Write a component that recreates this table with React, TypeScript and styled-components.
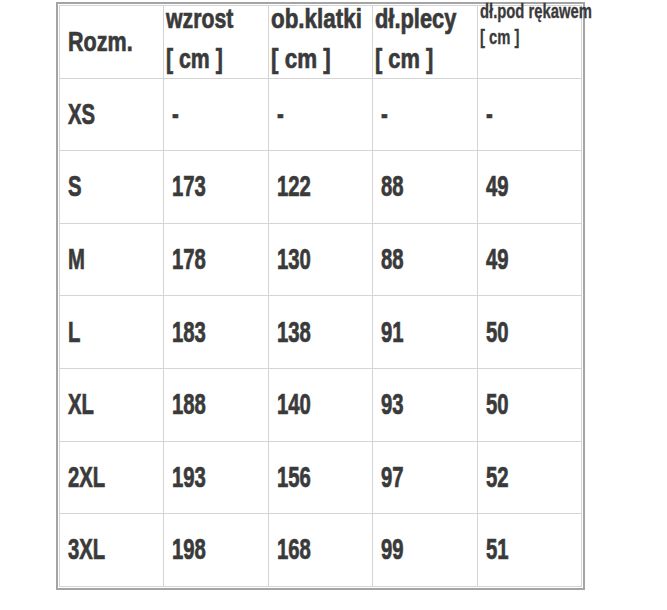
import React from "react";
import styled, { createGlobalStyle } from "styled-components";

interface IRow {
  size: string;
  values: string[];
}

interface ITextProps {
  $scale: number;
}

const rows: IRow[] = [
  { size: "XS", values: ["-", "-", "-", "-"] },
  { size: "S", values: ["173", "122", "88", "49"] },
  { size: "M", values: ["178", "130", "88", "49"] },
  { size: "L", values: ["183", "138", "91", "50"] },
  { size: "XL", values: ["188", "140", "93", "50"] },
  { size: "2XL", values: ["193", "156", "97", "52"] },
  { size: "3XL", values: ["198", "168", "99", "51"] },
];

const GlobalStyle = createGlobalStyle`
  html, body {
    margin: 0;
    padding: 0;
    background: #ffffff;
  }
  body {
    font-family: "Liberation Sans", Arial, sans-serif;
    color: #3a3a3a;
  }
`;

const Page = styled.div`
  width: 667px;
  height: 610px;
  padding: 2px 0 0 56px;
  box-sizing: border-box;
`;

const TableFrame = styled.div`
  width: 529px;
  box-sizing: border-box;
  border: 2px solid #a4a4a4;
  padding: 1px;
`;

const Grid = styled.div`
  display: grid;
  grid-template-columns: repeat(5, 1fr);
  grid-auto-rows: 72.6px;
  border-top: 1px solid #d4d4d4;
  border-left: 1px solid #d4d4d4;
`;

const Cell = styled.div`
  display: flex;
  align-items: center;
  box-sizing: border-box;
  border-right: 1px solid #d4d4d4;
  border-bottom: 1px solid #d4d4d4;
  padding-left: 8px;
  font-size: 29px;
  font-weight: 700;
  line-height: 1;
  min-width: 0;
  -webkit-text-stroke: 0.7px #3a3a3a;
`;

const SizeHeadCell = styled(Cell)`
  font-size: 28px;
`;

const HeadCell = styled(Cell)`
  align-items: flex-start;
  padding-left: 2px;
  font-size: 28px;
  line-height: 40px;
`;

const SmallHeadCell = styled(HeadCell)`
  font-size: 20px;
  line-height: 26px;
  -webkit-text-stroke: 0.3px #3a3a3a;
`;

const Text = styled.span<ITextProps>`
  display: inline-block;
  white-space: nowrap;
  transform: scaleX(${(p: ITextProps) => p.$scale});
  transform-origin: left center;
`;

const HeadText = styled(Text)`
  margin-top: -7px;
`;

const SmallText = styled(Text)`
  margin-top: -8px;
`;

const App: React.FC = (): JSX.Element => {
  return (
    <Page>
      <GlobalStyle />
      <TableFrame>
        <Grid>
          <SizeHeadCell>
            <Text $scale={0.77}>Rozm.</Text>
          </SizeHeadCell>
          <HeadCell>
            <HeadText $scale={0.76}>
              wzrost
              <br />[ cm ]
            </HeadText>
          </HeadCell>
          <HeadCell>
            <HeadText $scale={0.8}>
              ob.klatki
              <br />[ cm ]
            </HeadText>
          </HeadCell>
          <HeadCell>
            <HeadText $scale={0.78}>
              dł.plecy
              <br />[ cm ]
            </HeadText>
          </HeadCell>
          <SmallHeadCell>
            <SmallText $scale={0.74}>
              dł.pod rękawem
              <br />[ cm ]
            </SmallText>
          </SmallHeadCell>

          {rows.map((row: IRow) => (
            <React.Fragment key={row.size}>
              <Cell>
                <Text $scale={0.7}>{row.size}</Text>
              </Cell>
              {row.values.map((value: string, i: number) => (
                <Cell key={i}>
                  <Text $scale={0.7}>{value}</Text>
                </Cell>
              ))}
            </React.Fragment>
          ))}
        </Grid>
      </TableFrame>
    </Page>
  );
};

export default App;
